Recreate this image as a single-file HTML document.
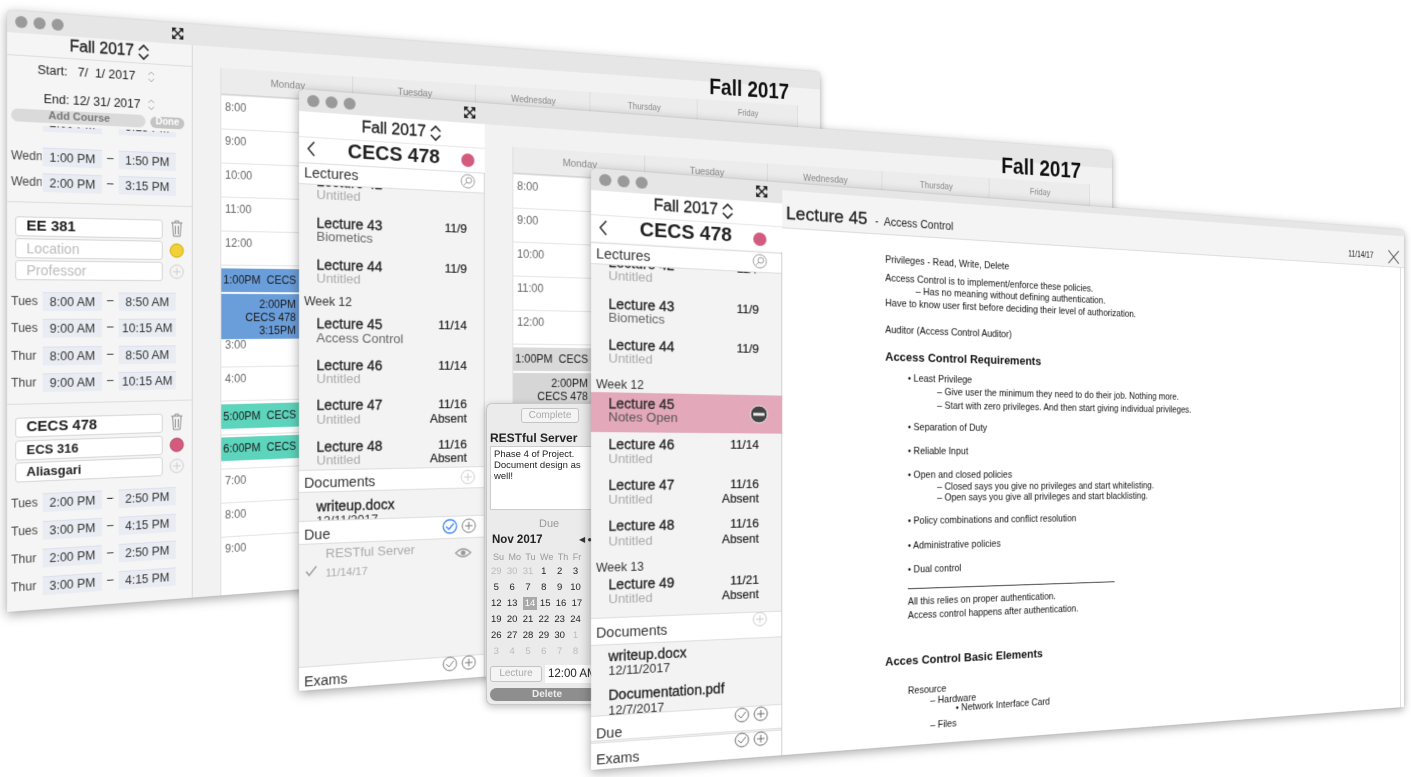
<!DOCTYPE html>
<html><head><meta charset="utf-8">
<style>
*{margin:0;padding:0;box-sizing:border-box}
html,body{width:1411px;height:777px;overflow:hidden;background:#fff;font-family:"Liberation Sans",sans-serif;color:#222}
.win{position:absolute;width:1000px;height:602px}
.flat{position:absolute;left:0;top:0;width:1000px;height:602px;transform-origin:0 0;transform:matrix3d(1.02605,0.07825,0,0.00026206,0,1,0,0,0,0,1,0,0,0,0,1);background:#f2f2f2;box-shadow:0 3px 12px rgba(0,0,0,.35),0 0 1px rgba(0,0,0,.4);overflow:hidden;border-radius:5px 5px 0 0}
.a{position:absolute;white-space:nowrap;line-height:16px}
.tb{position:absolute;left:0;top:0;width:1000px;height:22px;background:#e6e6e6}
.dot{position:absolute;top:5px;width:12px;height:12px;border-radius:50%;background:#9a9a9a}
.side{position:absolute;left:0;top:22px;width:190px;height:580px;background:#f5f5f5;border-right:1px solid #d6d6d6}
.hl{position:absolute;left:0;height:1px;background:#dcdcdc}
.fld{position:absolute;left:8px;width:150px;height:20px;background:#fff;border:1px solid #d4d4d4;border-radius:3px;font-size:14px;line-height:18px;padding-left:10px}
.day{position:absolute;left:4px;width:30px;overflow:hidden;font-size:12px;color:#444;line-height:16px}
.tbx{position:absolute;width:60px;height:19px;background:#e9edf3;font-size:12.5px;color:#333;text-align:center;line-height:19px;border-top:1px solid #dde}
.grid{position:absolute;left:220px;top:44px;width:745px;height:558px;background:#fff;border-left:1px solid #ddd}
.gh{position:absolute;top:0;height:28px;width:149px;background:#ececec;border-right:1px solid #d8d8d8;border-bottom:1px solid #d0d0d0;font-size:11px;color:#888;text-align:center;line-height:28px}
.row{position:absolute;left:0;width:745px;height:36px;border-top:1px solid #e2e2e2;font-size:12px;color:#666;padding:5px 0 0 4px}
.ev{position:absolute;left:0;width:149px;font-size:12px;color:#1a1a1a;text-align:right;padding-right:4px;line-height:14px}
.lt{position:absolute;left:17px;font-size:14px;color:#1e1e1e;line-height:16px;white-space:nowrap;-webkit-text-stroke:0.3px #1e1e1e}
.ls{position:absolute;left:17px;font-size:13px;color:#aaa;line-height:16px;white-space:nowrap}
.ld{position:absolute;right:18px;font-size:12.5px;color:#1e1e1e;line-height:16px;text-align:right;white-space:nowrap;-webkit-text-stroke:0.2px #1e1e1e}
.w3 .ld{right:24px}
.wk{position:absolute;left:5px;font-size:12px;color:#333;line-height:16px}
.band{position:absolute;left:0;width:100%;background:#fff;border-top:1px solid #dcdcdc;border-bottom:1px solid #dcdcdc}
.bt{position:absolute;left:5px;font-size:14px;color:#333;line-height:16px}
.n{position:absolute;font-size:10.5px;color:#111;white-space:nowrap;line-height:12px}
.nb{position:absolute;font-size:13px;font-weight:bold;color:#111;white-space:nowrap;line-height:14px}
svg{position:absolute;overflow:visible}
</style></head><body>

<!-- WINDOW 1 -->
<div class="win" style="left:7px;top:10px"><div class="flat">
 <div class="tb"></div>
 <div class="dot" style="left:8px"></div><div class="dot" style="left:26px"></div><div class="dot" style="left:44px"></div>
 <svg style="left:168px;top:5px" width="12" height="12"><path d="M2 2L10 10M10 2L2 10" stroke="#222" stroke-width="1.5"/><path d="M0 0h5L0 5zM12 0h-5l5 5zM0 12h5l-5-5zM12 12h-5l5-5z" fill="#222"/></svg>
 <div class="side">
  <div class="a" style="left:62px;top:3px;font-size:16px;-webkit-text-stroke:0.3px #222">Fall 2017</div>
  <svg style="left:132px;top:2px" width="12" height="18"><path d="M1 7L6 2L11 7M1 11L6 16L11 11" stroke="#222" stroke-width="1.6" fill="none"/></svg>
  <div class="hl" style="top:22px;width:190px"></div>
  <div class="a" style="left:30px;top:28px;font-size:12.5px">Start:&nbsp;&nbsp; 7/&nbsp; 1/ 2017</div>
  <svg style="left:142px;top:29px" width="8" height="14"><path d="M1 5L4 2L7 5M1 9L4 12L7 9" stroke="#aaa" fill="none"/></svg>
  <div class="a" style="left:36px;top:57px;font-size:12.5px">End: 12/ 31/ 2017</div>
  <svg style="left:142px;top:58px" width="8" height="14"><path d="M1 5L4 2L7 5M1 9L4 12L7 9" stroke="#aaa" fill="none"/></svg>
  <div class="day" style="top:80px">Mon</div>
  <div class="tbx" style="left:35px;top:79px">2:00 PM</div><div class="tbx" style="left:112px;top:79px">3:15 PM</div>
  <div style="position:absolute;left:0;top:72px;width:189px;height:20px;background:#f5f5f5"></div>
  <div class="a" style="left:4px;top:76px;width:136px;height:13px;background:#dadada;border-radius:7px;font-size:11px;font-weight:bold;color:#777;text-align:center;line-height:13px">Add Course</div>
  <div class="a" style="left:145px;top:77px;width:36px;height:12px;background:#c4c4c4;border-radius:6px;font-size:10px;font-weight:bold;color:#fff;text-align:center;line-height:12px">Done</div>
  <div class="day" style="top:115px">Wedn</div><div class="tbx" style="left:35px;top:114px">1:00 PM</div><div class="a" style="left:100px;top:114px;font-size:12px">–</div><div class="tbx" style="left:112px;top:114px">1:50 PM</div>
  <div class="day" style="top:141px">Wedn</div><div class="tbx" style="left:35px;top:140px">2:00 PM</div><div class="a" style="left:100px;top:140px;font-size:12px">–</div><div class="tbx" style="left:112px;top:140px">3:15 PM</div>
  <div class="hl" style="top:169px;width:190px"></div>
  <div class="fld" style="top:184px;font-weight:bold;font-size:15px">EE 381</div>
  <div class="fld" style="top:206px;color:#bbb">Location</div>
  <div class="fld" style="top:228px;color:#bbb">Professor</div>
  <svg style="left:166px;top:184px" width="14" height="18"><path d="M1 3h12M5 3V1h4v2M2.5 3l1 14h7l1-14M5.5 6v9M8.5 6v9" stroke="#888" fill="none"/></svg>
  <svg style="left:165px;top:208px" width="16" height="16"><circle cx="8" cy="8" r="7" fill="#f0d237" stroke="#c9a800"/></svg>
  <svg style="left:165px;top:230px" width="16" height="16"><circle cx="8" cy="8" r="7" fill="none" stroke="#ccc"/><path d="M8 4v8M4 8h8" stroke="#ccc"/></svg>
  <div class="day" style="top:261px">Tues</div><div class="tbx" style="left:35px;top:260px">8:00 AM</div><div class="a" style="left:100px;top:260px;font-size:12px">–</div><div class="tbx" style="left:112px;top:260px">8:50 AM</div>
  <div class="day" style="top:288px">Tues</div><div class="tbx" style="left:35px;top:287px">9:00 AM</div><div class="a" style="left:100px;top:287px;font-size:12px">–</div><div class="tbx" style="left:112px;top:287px">10:15 AM</div>
  <div class="day" style="top:316px">Thur</div><div class="tbx" style="left:35px;top:315px">8:00 AM</div><div class="a" style="left:100px;top:315px;font-size:12px">–</div><div class="tbx" style="left:112px;top:315px">8:50 AM</div>
  <div class="day" style="top:343px">Thur</div><div class="tbx" style="left:35px;top:342px">9:00 AM</div><div class="a" style="left:100px;top:342px;font-size:12px">–</div><div class="tbx" style="left:112px;top:342px">10:15 AM</div>
  <div class="hl" style="top:372px;width:190px"></div>
  <div class="fld" style="top:386px;font-weight:bold;font-size:15px">CECS 478</div>
  <div class="fld" style="top:409px;font-weight:bold;font-size:13px">ECS 316</div>
  <div class="fld" style="top:431px;font-weight:bold;font-size:13px">Aliasgari</div>
  <svg style="left:166px;top:386px" width="14" height="18"><path d="M1 3h12M5 3V1h4v2M2.5 3l1 14h7l1-14M5.5 6v9M8.5 6v9" stroke="#888" fill="none"/></svg>
  <svg style="left:165px;top:411px" width="16" height="16"><circle cx="8" cy="8" r="7" fill="#d45a7e" stroke="#b0405f"/></svg>
  <svg style="left:165px;top:433px" width="16" height="16"><circle cx="8" cy="8" r="7" fill="none" stroke="#ccc"/><path d="M8 4v8M4 8h8" stroke="#ccc"/></svg>
  <div class="day" style="top:464px">Tues</div><div class="tbx" style="left:35px;top:463px">2:00 PM</div><div class="a" style="left:100px;top:463px;font-size:12px">–</div><div class="tbx" style="left:112px;top:463px">2:50 PM</div>
  <div class="day" style="top:492px">Tues</div><div class="tbx" style="left:35px;top:491px">3:00 PM</div><div class="a" style="left:100px;top:491px;font-size:12px">–</div><div class="tbx" style="left:112px;top:491px">4:15 PM</div>
  <div class="day" style="top:520px">Thur</div><div class="tbx" style="left:35px;top:519px">2:00 PM</div><div class="a" style="left:100px;top:519px;font-size:12px">–</div><div class="tbx" style="left:112px;top:519px">2:50 PM</div>
  <div class="day" style="top:548px">Thur</div><div class="tbx" style="left:35px;top:547px">3:00 PM</div><div class="a" style="left:100px;top:547px;font-size:12px">–</div><div class="tbx" style="left:112px;top:547px">4:15 PM</div>
 </div>
 <div class="grid">
  <div class="gh" style="left:0">Monday</div><div class="gh" style="left:149px">Tuesday</div><div class="gh" style="left:298px">Wednesday</div><div class="gh" style="left:447px">Thursday</div><div class="gh" style="left:596px">Friday</div>
  <div class="row" style="top:28px">8:00</div><div class="row" style="top:64px">9:00</div><div class="row" style="top:100px">10:00</div><div class="row" style="top:136px">11:00</div><div class="row" style="top:172px">12:00</div><div class="row" style="top:208px">1:00</div><div class="row" style="top:244px">2:00</div><div class="row" style="top:280px">3:00</div><div class="row" style="top:316px">4:00</div><div class="row" style="top:352px">5:00</div><div class="row" style="top:388px">6:00</div><div class="row" style="top:424px">7:00</div><div class="row" style="top:460px">8:00</div><div class="row" style="top:496px">9:00</div>
  <div class="ev" style="top:212px;height:25px;background:#6a9edb;line-height:25px;text-align:left;padding-left:2px">1:00PM&nbsp; CECS 478</div>
  <div class="ev" style="top:239px;height:48px;background:#6a9edb;padding-top:4px;padding-right:66px">2:00PM<br>CECS 478<br>3:15PM</div>
  <div class="ev" style="top:356px;height:26px;background:#5dd4bc;line-height:26px;text-align:left;padding-left:2px">5:00PM&nbsp; CECS 378</div>
  <div class="ev" style="top:391px;height:25px;background:#5dd4bc;line-height:25px;text-align:left;padding-left:2px">6:00PM&nbsp; CECS 378</div>
 </div>
 <div class="a" style="left:834px;top:12px;font-size:28px;font-weight:bold;line-height:32px;color:#111">Fall 2017</div>
</div></div>

<!-- WINDOW 2 -->
<div class="win" style="left:299px;top:89px"><div class="flat">
 <div class="tb"></div>
 <div class="dot" style="left:8px"></div><div class="dot" style="left:26px"></div><div class="dot" style="left:44px"></div>
 <svg style="left:168px;top:5px" width="12" height="12"><path d="M2 2L10 10M10 2L2 10" stroke="#222" stroke-width="1.5"/><path d="M0 0h5L0 5zM12 0h-5l5 5zM0 12h5l-5-5zM12 12h-5l5-5z" fill="#222"/></svg>
 <div class="grid">
  <div class="gh" style="left:0">Monday</div><div class="gh" style="left:149px">Tuesday</div><div class="gh" style="left:298px">Wednesday</div><div class="gh" style="left:447px">Thursday</div><div class="gh" style="left:596px">Friday</div>
  <div class="row" style="top:28px">8:00</div><div class="row" style="top:64px">9:00</div><div class="row" style="top:100px">10:00</div><div class="row" style="top:136px">11:00</div><div class="row" style="top:172px">12:00</div><div class="row" style="top:208px">1:00</div><div class="row" style="top:244px">2:00</div><div class="row" style="top:280px">3:00</div><div class="row" style="top:316px">4:00</div><div class="row" style="top:352px">5:00</div><div class="row" style="top:388px">6:00</div><div class="row" style="top:424px">7:00</div><div class="row" style="top:460px">8:00</div><div class="row" style="top:496px">9:00</div>
  <div class="ev" style="top:212px;height:25px;background:#d9d9d9;line-height:25px;text-align:left;padding-left:2px">1:00PM&nbsp; CECS 478</div>
  <div class="ev" style="top:239px;height:48px;background:#d6d6d6;padding-top:4px;padding-right:66px">2:00PM<br>CECS 478<br>3:15PM</div>
  <div class="ev" style="top:356px;height:26px;background:#d9d9d9;line-height:26px;text-align:left;padding-left:2px">5:00PM&nbsp; CECS 378</div>
  <div class="ev" style="top:391px;height:25px;background:#d9d9d9;line-height:25px;text-align:left;padding-left:2px">6:00PM&nbsp; CECS 378</div>
 </div>
 <div class="a" style="left:834px;top:12px;font-size:28px;font-weight:bold;line-height:32px;color:#111">Fall 2017</div>
 <div class="side" style="background:#f3f3f3">
  <div style="position:absolute;left:0;top:0;width:190px;height:51px;background:#fff"></div>
  <div class="a" style="left:62px;top:5px;font-size:16px;-webkit-text-stroke:0.3px #222">Fall 2017</div>
  <svg style="left:132px;top:4px" width="12" height="18"><path d="M1 7L6 2L11 7M1 11L6 16L11 11" stroke="#222" stroke-width="1.6" fill="none"/></svg>
  <div class="hl" style="top:25px;width:190px;background:#e6e6e6"></div>
  <svg style="left:8px;top:29px" width="8" height="16"><path d="M7 1L1 8L7 15" stroke="#333" stroke-width="1.5" fill="none"/></svg>
  <div class="a" style="left:48px;top:27px;font-size:20px;font-weight:bold;line-height:22px">CECS 478</div>
  <svg style="left:164px;top:31px" width="16" height="16"><circle cx="8" cy="8" r="7" fill="#d45a7e"/></svg>
  <div class="lt" style="top:61px">Lecture 42</div><div class="ld" style="top:61px">11/7</div>
  <div class="band" style="top:51px;height:22px"></div>
  <div class="bt" style="top:53px">Lectures</div>
  <svg style="left:164px;top:53px" width="16" height="16"><circle cx="8" cy="8" r="7" fill="none" stroke="#999"/><circle cx="9" cy="7" r="3" fill="none" stroke="#999"/><path d="M7 9L4 12" stroke="#999"/></svg>
  <div class="ls" style="top:75px">Untitled</div>
  <div class="lt" style="top:103px">Lecture 43</div><div class="ld" style="top:103px">11/9</div><div class="ls" style="top:117px;color:#666">Biometics</div>
  <div class="lt" style="top:145px">Lecture 44</div><div class="ld" style="top:145px">11/9</div><div class="ls" style="top:159px">Untitled</div>
  <div class="wk" style="top:182px">Week 12</div>
  <div class="lt" style="top:204px">Lecture 45</div><div class="ld" style="top:204px">11/14</div><div class="ls" style="top:219px;color:#666">Access Control</div>
  <div class="lt" style="top:246px">Lecture 46</div><div class="ld" style="top:246px">11/14</div><div class="ls" style="top:260px">Untitled</div>
  <div class="lt" style="top:286px">Lecture 47</div><div class="ld" style="top:286px">11/16</div><div class="ls" style="top:301px">Untitled</div><div class="ld" style="top:301px">Absent</div>
  <div class="lt" style="top:328px">Lecture 48</div><div class="ld" style="top:328px">11/16</div><div class="ls" style="top:342px">Untitled</div><div class="ld" style="top:342px">Absent</div>
  <div class="band" style="top:359px;height:23px"></div>
  <div class="bt" style="top:364px">Documents</div>
  <svg style="left:164px;top:362px" width="16" height="16"><circle cx="8" cy="8" r="7" fill="none" stroke="#ccc"/><path d="M8 4v8M4 8h8" stroke="#ccc"/></svg>
  <div class="lt" style="top:388px">writeup.docx</div><div class="ls" style="top:403px;color:#333;font-size:12.5px">12/11/2017</div>
  <div class="band" style="top:410px;height:24px"></div>
  <div class="bt" style="top:416px">Due</div>
  <svg style="left:145px;top:413px" width="16" height="16"><circle cx="8" cy="8" r="7" fill="none" stroke="#3b82f6" stroke-width="1.3"/><path d="M4 8l3 3 5-6" stroke="#3b82f6" stroke-width="1.4" fill="none"/></svg>
  <svg style="left:165px;top:413px" width="16" height="16"><circle cx="8" cy="8" r="7" fill="none" stroke="#777"/><path d="M8 4v8M4 8h8" stroke="#777"/></svg>
  <svg style="left:6px;top:455px" width="12" height="12"><path d="M1 6l3 4 7-9" stroke="#999" stroke-width="1.3" fill="none"/></svg>
  <div class="ls" style="left:26px;top:436px;color:#aaa">RESTful Server</div>
  <div class="ls" style="left:26px;top:456px;font-size:11px">11/14/17</div>
  <svg style="left:158px;top:443px" width="18" height="12"><path d="M1 6Q9 -2 17 6Q9 14 1 6z" fill="none" stroke="#999" stroke-width="1.3"/><circle cx="9" cy="6" r="2.5" fill="#999"/></svg>
  <div class="band" style="top:556px;height:30px;border-bottom:none"></div>
  <div class="bt" style="top:563px">Exams</div>
  <svg style="left:145px;top:556px" width="16" height="16"><circle cx="8" cy="8" r="7" fill="none" stroke="#777"/><path d="M4 8l3 3 5-6" stroke="#777" fill="none"/></svg>
  <svg style="left:165px;top:556px" width="16" height="16"><circle cx="8" cy="8" r="7" fill="none" stroke="#777"/><path d="M8 4v8M4 8h8" stroke="#777"/></svg>
 </div>
</div></div>

<!-- POPOVER -->
<div style="position:absolute;left:486px;top:403px;width:120px;height:302px;background:#ebebeb;border:1px solid #c8c8c8;border-radius:6px;box-shadow:0 2px 8px rgba(0,0,0,.25);overflow:hidden;font-family:'Liberation Sans',sans-serif">
 <div class="a" style="left:34px;top:4px;width:58px;height:15px;border:1px solid #c4c4c4;border-radius:3px;background:#f4f4f4;font-size:10px;color:#aaa;text-align:center;line-height:13px">Complete</div>
 <div class="a" style="left:3px;top:26px;font-size:12px;font-weight:bold;color:#222">RESTful Server</div>
 <div class="a" style="left:3px;top:42px;width:115px;height:64px;background:#fff;border:1px solid #ccc;font-size:9.5px;line-height:11px;padding:2px 3px;white-space:normal;color:#222">Phase 4 of Project. Document design as well!</div>
 <div class="a" style="left:52px;top:112px;font-size:11px;color:#999">Due</div>
 <div class="a" style="left:5px;top:128px;font-size:11.5px;font-weight:bold">Nov 2017</div>
 <div class="a" style="left:92px;top:128px;font-size:8px;color:#333">◀ ●</div>
 <div class="a" style="left:6px;top:145px;font-size:9px;color:#999;word-spacing:2px">Su Mo Tu We Th Fr</div>
 <div style="position:absolute;left:4px;top:160px;font-size:9.5px;line-height:16px;color:#222">
  <div style="white-space:pre"><span style="color:#bbb">29  30  31 </span>  1    2    3</div>
  <div style="white-space:pre"> 5    6    7    8    9   10</div>
  <div style="white-space:pre">12  13  <span style="background:#a9a9a9;color:#fff;padding:1px 2px">14</span> 15  16  17</div>
  <div style="white-space:pre">19  20  21  22  23  24</div>
  <div style="white-space:pre">26  27  28  29  30   <span style="color:#bbb">1</span></div>
  <div style="white-space:pre;color:#bbb"> 3    4    5    6    7    8</div>
 </div>
 <div class="a" style="left:3px;top:262px;width:52px;height:16px;border:1px solid #c4c4c4;border-radius:3px;background:#f4f4f4;font-size:10px;color:#aaa;text-align:center;line-height:14px">Lecture</div>
 <div class="a" style="left:58px;top:261px;width:60px;height:18px;background:#fff;font-size:11.5px;line-height:18px;padding-left:3px">12:00 AM</div>
 <div class="a" style="left:3px;top:284px;width:114px;height:13px;background:#8e8e8e;border-radius:7px;font-size:10px;font-weight:bold;color:#eee;text-align:center;line-height:13px">Delete</div>
</div>

<!-- WINDOW 3 -->
<div class="win w3" style="left:591px;top:168px"><div class="flat" style="background:#fff">
 <div class="tb"></div>
 <div class="dot" style="left:8px"></div><div class="dot" style="left:26px"></div><div class="dot" style="left:44px"></div>
 <svg style="left:168px;top:5px" width="12" height="12"><path d="M2 2L10 10M10 2L2 10" stroke="#222" stroke-width="1.5"/><path d="M0 0h5L0 5zM12 0h-5l5 5zM0 12h5l-5-5zM12 12h-5l5-5z" fill="#222"/></svg>
 <div style="position:absolute;left:196px;top:8px;width:804px;height:40px;background:#f4f4f4;border-bottom:1px solid #d8d8d8"></div>
 <div class="a" style="left:200px;top:22px;font-size:19px;line-height:22px;color:#222;-webkit-text-stroke:0.3px #222">Lecture 45 <span style="font-size:12px;-webkit-text-stroke:0">&nbsp;-&nbsp; Access Control</span></div>
 <div class="a" style="left:915px;top:28px;font-size:10px;color:#222">11/14/17</div>
 <svg style="left:975px;top:26px" width="18" height="18"><path d="M1 1L17 17M17 1L1 17" stroke="#555" stroke-width="1.3"/></svg>
 <div style="position:absolute;left:994px;top:48px;width:1px;height:554px;background:#ccc"></div>
 <div class="n" style="left:310px;top:69px">Privileges - Read, Write, Delete</div>
 <div class="n" style="left:310px;top:89px">Access Control is to implement/enforce these policies.</div>
 <div class="n" style="left:345px;top:102px">– Has no meaning without defining authentication.</div>
 <div class="n" style="left:310px;top:116px">Have to know user first before deciding their level of authorization.</div>
 <div class="n" style="left:310px;top:145px">Auditor (Access Control Auditor)</div>
 <div class="nb" style="left:310px;top:173px">Access Control Requirements</div>
 <div class="n" style="left:336px;top:197px">• Least Privilege</div>
 <div class="n" style="left:370px;top:211px">– Give user the minimum they need to do their job. Nothing more.</div>
 <div class="n" style="left:370px;top:226px">– Start with zero privileges. And then start giving individual privileges.</div>
 <div class="n" style="left:336px;top:250px">• Separation of Duty</div>
 <div class="n" style="left:336px;top:276px">• Reliable Input</div>
 <div class="n" style="left:336px;top:302px">• Open and closed policies</div>
 <div class="n" style="left:370px;top:315px">– Closed says you give no privileges and start whitelisting.</div>
 <div class="n" style="left:370px;top:327px">– Open says you give all privileges and start blacklisting.</div>
 <div class="n" style="left:336px;top:352px">• Policy combinations and conflict resolution</div>
 <div class="n" style="left:336px;top:379px">• Administrative policies</div>
 <div class="n" style="left:336px;top:405px">• Dual control</div>
 <div style="position:absolute;left:336px;top:431px;width:253px;height:1px;background:#333"></div>
 <div class="n" style="left:336px;top:440px">All this relies on proper authentication.</div>
 <div class="n" style="left:336px;top:455px">Access control happens after authentication.</div>
 <div class="nb" style="left:310px;top:503px">Acces Control Basic Elements</div>
 <div class="n" style="left:336px;top:537px">Resource</div>
 <div class="n" style="left:362px;top:549px">– Hardware</div>
 <div class="n" style="left:392px;top:559px">• Network Interface Card</div>
 <div class="n" style="left:362px;top:576px">– Files</div>
 <div class="side" style="width:196px;background:#f3f3f3;border-right:1px solid #ccc">
  <div style="position:absolute;left:0;top:0;width:196px;height:51px;background:#fff"></div>
  <div class="a" style="left:62px;top:4px;font-size:16px;-webkit-text-stroke:0.3px #222">Fall 2017</div>
  <svg style="left:132px;top:3px" width="12" height="18"><path d="M1 7L6 2L11 7M1 11L6 16L11 11" stroke="#222" stroke-width="1.6" fill="none"/></svg>
  <div class="hl" style="top:24px;width:196px;background:#e6e6e6"></div>
  <svg style="left:8px;top:29px" width="8" height="16"><path d="M7 1L1 8L7 15" stroke="#333" stroke-width="1.5" fill="none"/></svg>
  <div class="a" style="left:48px;top:26px;font-size:20px;font-weight:bold;line-height:22px">CECS 478</div>
  <svg style="left:164px;top:31px" width="16" height="16"><circle cx="8" cy="8" r="7" fill="#d45a7e"/></svg>
  <div class="lt" style="top:63px">Lecture 42</div><div class="ld" style="top:63px">11/7</div>
  <div class="band" style="top:52px;height:22px"></div>
  <div class="bt" style="top:55px">Lectures</div>
  <svg style="left:164px;top:54px" width="16" height="16"><circle cx="8" cy="8" r="7" fill="none" stroke="#999"/><circle cx="9" cy="7" r="3" fill="none" stroke="#999"/><path d="M7 9L4 12" stroke="#999"/></svg>
  <div class="ls" style="top:77px">Untitled</div>
  <div class="lt" style="top:105px">Lecture 43</div><div class="ld" style="top:105px">11/9</div><div class="ls" style="top:119px;color:#666">Biometics</div>
  <div class="lt" style="top:146px">Lecture 44</div><div class="ld" style="top:146px">11/9</div><div class="ls" style="top:160px">Untitled</div>
  <div class="wk" style="top:186px">Week 12</div>
  <div style="position:absolute;left:0;top:202px;width:196px;height:40px;background:#e3a8b9"></div>
  <div class="lt" style="top:205px;color:#333">Lecture 45</div><div class="ls" style="top:219px;color:#555">Notes Open</div>
  <svg style="left:161px;top:212px" width="20" height="20"><circle cx="10" cy="10" r="9" fill="#444" stroke="#eee"/><rect x="4" y="8.5" width="12" height="3" fill="#eee"/></svg>
  <div class="lt" style="top:246px">Lecture 46</div><div class="ld" style="top:246px">11/14</div><div class="ls" style="top:261px">Untitled</div>
  <div class="lt" style="top:287px">Lecture 47</div><div class="ld" style="top:287px">11/16</div><div class="ls" style="top:302px">Untitled</div><div class="ld" style="top:302px">Absent</div>
  <div class="lt" style="top:328px">Lecture 48</div><div class="ld" style="top:328px">11/16</div><div class="ls" style="top:344px">Untitled</div><div class="ld" style="top:344px">Absent</div>
  <div class="wk" style="top:370px">Week 13</div>
  <div class="lt" style="top:387px">Lecture 49</div><div class="ld" style="top:387px">11/21</div><div class="ls" style="top:402px">Untitled</div><div class="ld" style="top:402px">Absent</div>
  <div class="band" style="top:428px;height:28px"></div>
  <div class="bt" style="top:435px">Documents</div>
  <svg style="left:164px;top:428px" width="16" height="16"><circle cx="8" cy="8" r="7" fill="none" stroke="#ccc"/><path d="M8 4v8M4 8h8" stroke="#ccc"/></svg>
  <div class="lt" style="top:459px">writeup.docx</div><div class="ls" style="top:474px;color:#333;font-size:12.5px">12/11/2017</div>
  <div class="lt" style="top:498px">Documentation.pdf</div><div class="ls" style="top:514px;color:#333;font-size:12.5px">12/7/2017</div>
  <div class="band" style="top:526px;height:26px"></div>
  <div class="bt" style="top:536px">Due</div>
  <svg style="left:145px;top:527px" width="16" height="16"><circle cx="8" cy="8" r="7" fill="none" stroke="#666"/><path d="M4 8l3 3 5-6" stroke="#666" fill="none"/></svg>
  <svg style="left:165px;top:527px" width="16" height="16"><circle cx="8" cy="8" r="7" fill="none" stroke="#666"/><path d="M8 4v8M4 8h8" stroke="#666"/></svg>
  <div class="band" style="top:553px;height:30px;border-bottom:none"></div>
  <div class="bt" style="top:562px">Exams</div>
  <svg style="left:145px;top:553px" width="16" height="16"><circle cx="8" cy="8" r="7" fill="none" stroke="#666"/><path d="M4 8l3 3 5-6" stroke="#666" fill="none"/></svg>
  <svg style="left:165px;top:553px" width="16" height="16"><circle cx="8" cy="8" r="7" fill="none" stroke="#666"/><path d="M8 4v8M4 8h8" stroke="#666"/></svg>
 </div>
</div></div>
</body></html>
